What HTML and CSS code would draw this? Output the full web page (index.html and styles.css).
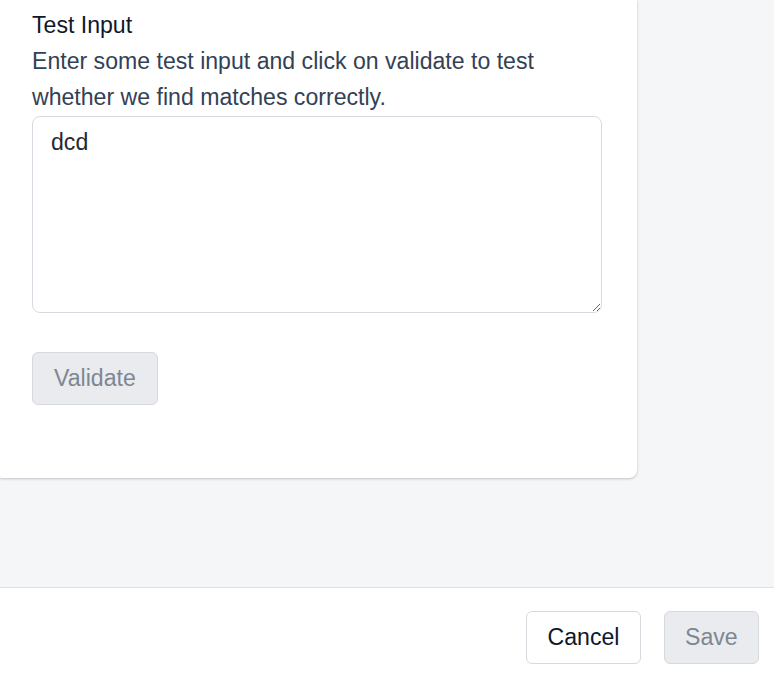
FILE: index.html
```html
<!DOCTYPE html>
<html lang="en">
<head>
<meta charset="utf-8">
<title>Test Input</title>
<link rel="stylesheet" href="styles.css">
</head>
<body>
<div class="page">
  <main class="main">
    <section class="card">
      <h2 class="title">Test Input</h2>
      <p class="desc">Enter some test input and click on validate to test whether we find matches correctly.</p>
      <textarea class="input">dcd</textarea>
      <div class="actions">
        <button class="btn btn-disabled" disabled>Validate</button>
      </div>
    </section>
  </main>
  <footer class="footer">
    <button class="btn btn-default">Cancel</button>
    <button class="btn btn-disabled" disabled>Save</button>
  </footer>
</div>
</body>
</html>
```
FILE: styles.css
```css
* { box-sizing: border-box; }
html, body { margin: 0; padding: 0; }
body {
  font-family: "Liberation Sans", Arial, sans-serif;
  font-size: 23.1px;
  line-height: 36px;
  background: #f5f6f8;
  width: 774px;
  height: 673px;
  overflow: hidden;
}
.page {
  display: flex;
  flex-direction: column;
  height: 673px;
}
.main {
  flex: 1;
  background: #f5f6f8;
  overflow: hidden;
}
.card {
  margin-left: -5px;
  width: 642px;
  background: #ffffff;
  border-radius: 0 0 8px 8px;
  box-shadow: 0 1px 3px rgba(15, 23, 42, 0.16), 0 1px 2px rgba(15, 23, 42, 0.08);
  padding: 7px 34px 73px 37px;
}
.title {
  margin: 0;
  font-size: 23.1px;
  line-height: 36px;
  font-weight: 500;
  color: #0f172a;
}
.desc {
  margin: 0 0 1px;
  color: #334155;
  font-size: 23.1px;
  line-height: 36px;
}
.input {
  display: block;
  width: 570px;
  height: 197px;
  border: 1px solid #d7dae0;
  border-radius: 8px;
  padding: 7px 18px;
  font-family: "Liberation Sans", Arial, sans-serif;
  font-size: 23.1px;
  line-height: 36px;
  color: #1f2937;
  background: #ffffff;
  resize: vertical;
  outline: none;
}
.actions {
  display: flex;
  margin-top: 39px;
}
.btn {
  height: 53px;
  padding: 0 21px;
  border-radius: 6px;
  font-family: "Liberation Sans", Arial, sans-serif;
  font-size: 23.1px;
  line-height: 1;
  cursor: pointer;
}
.btn-disabled {
  background: #e9ebee;
  border: 1px solid #d6d9de;
  color: #7d8793;
  cursor: default;
}
.btn-default {
  background: #ffffff;
  border: 1px solid #d6d9de;
  color: #0f172a;
}
.footer {
  flex: 0 0 86px;
  background: #ffffff;
  border-top: 1px solid #dfe1e5;
  display: flex;
  justify-content: flex-end;
  align-items: flex-start;
  gap: 23px;
  padding: 23px 15px 0;
}
.footer .btn {
  padding: 0 20.3px;
}
```
